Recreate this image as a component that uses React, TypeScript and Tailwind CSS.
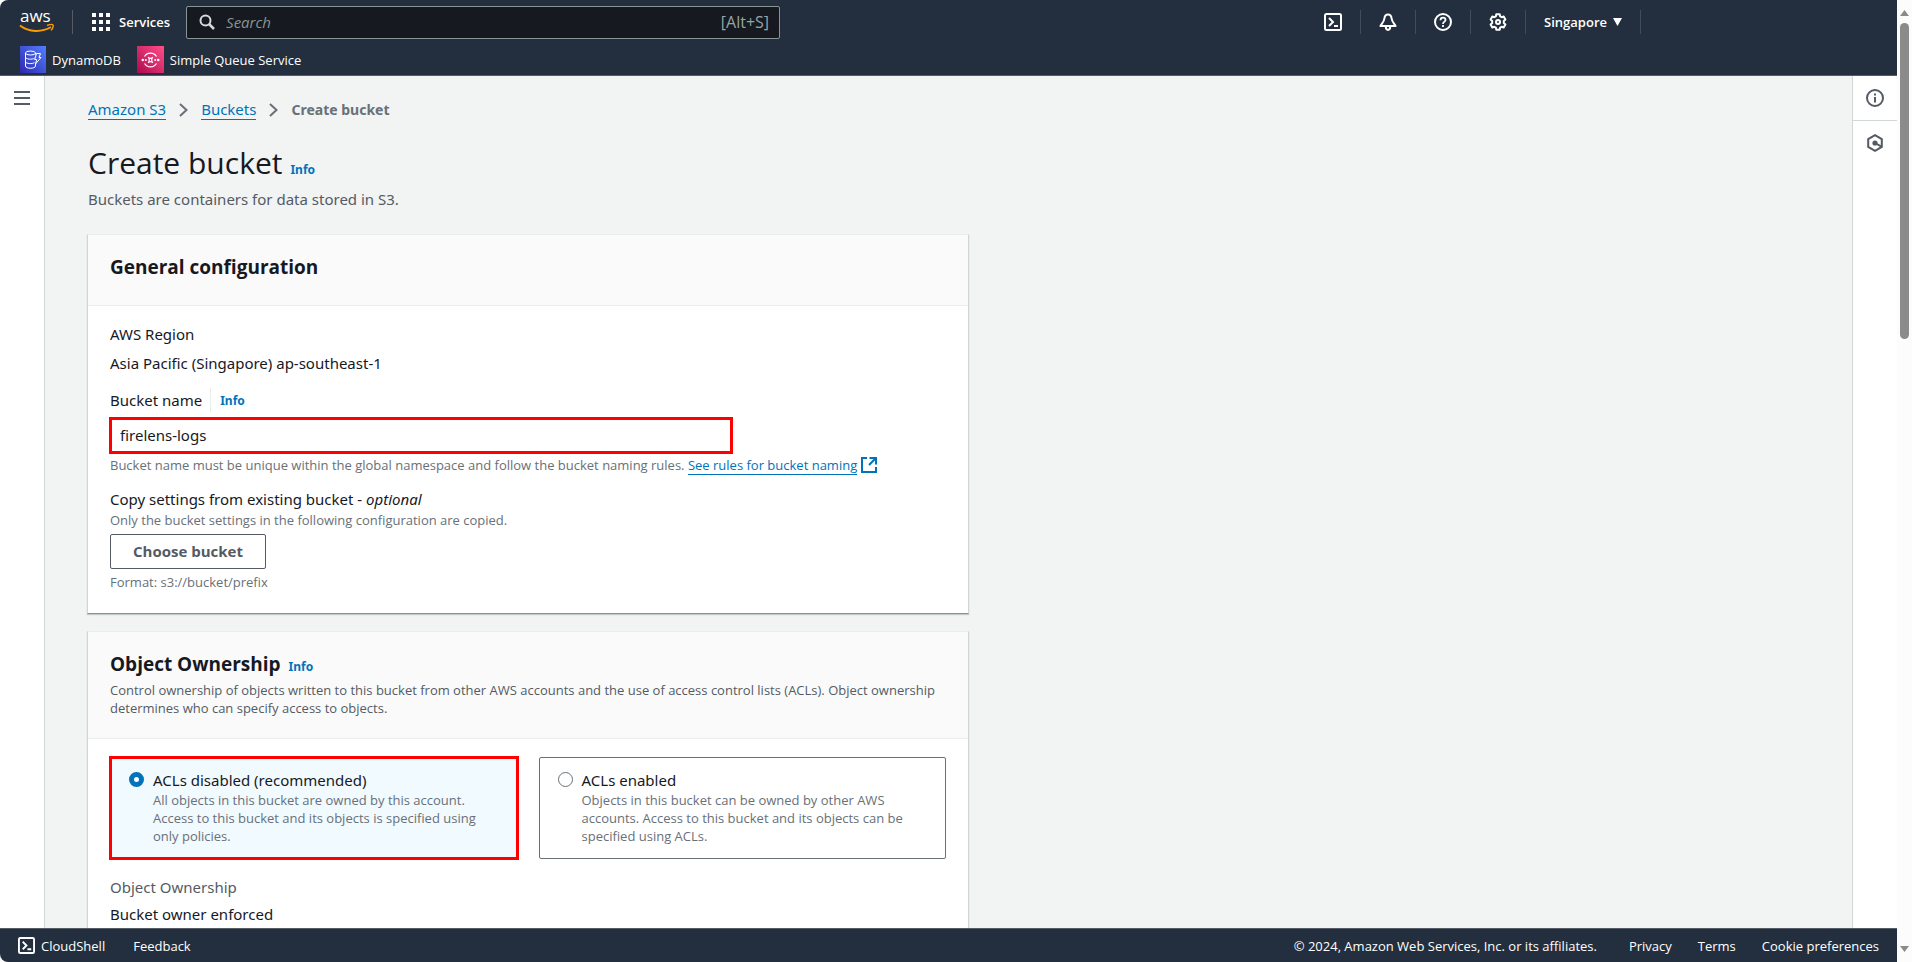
import { useState } from 'react'
import type { ReactNode } from 'react'

const aclOptions = [
    {
        id: 'disabled',
        label: 'ACLs disabled (recommended)',
        text: 'All objects in this bucket are owned by this account. Access to this bucket and its objects is specified using only policies.',
    },
    {
        id: 'enabled',
        label: 'ACLs enabled',
        text: 'Objects in this bucket can be owned by other AWS accounts. Access to this bucket and its objects can be specified using ACLs.',
    },
]

const AwsLogo = () => (
    <svg width="36" height="36" viewBox="0 -6 36 36" aria-label="AWS home">
        <text x="1" y="12" fill="#fff" fontSize="17" fontWeight="500" fontFamily="Open Sans, sans-serif">aws</text>
        <path d="M1 15.500 C10 22.500 23 22.500 32 17" fill="none" stroke="#f90" strokeWidth="2" />
        <path d="M28 15.500 C31 14.300 33.500 14.300 34 15 C34.400 16 33.600 18.600 32 20.400" fill="none" stroke="#f90" strokeWidth="1.400" />
    </svg>
)

const ShellIcon = ({ size = 18 }: { size?: number }) => (
    <svg width={size} height={size} viewBox="0 0 18 18" fill="none" stroke="currentColor" strokeWidth="2">
        <rect x="1" y="1" width="16" height="16" rx="1.5" />
        <path d="M5 5l4 4-4 4M10 13h4" />
    </svg>
)

const BellIcon = () => (
    <svg width="18" height="18" viewBox="0 0 18 18" fill="none" stroke="currentColor" strokeWidth="2" strokeLinejoin="round">
        <path d="M9 1.500c-2.600 0-3.400 2-3.600 4-.2 2.500-1.700 4-4 7.500h15.200c-2.300-3.500-3.800-5-4-7.500-.2-2-1-4-3.600-4z" />
        <path d="M6.800 13.500c0 4.500 4.400 4.500 4.400 0" />
    </svg>
)

const HelpIcon = () => (
    <svg width="18" height="18" viewBox="0 0 18 18" fill="none" stroke="currentColor" strokeWidth="2">
        <circle cx="9" cy="9" r="8" />
        <path d="M6.500 7.200c0-3.400 5-3.200 5-.2 0 1.700-2.500 1.700-2.500 4M9 12v2" strokeWidth="1.800" />
    </svg>
)

const GearIcon = () => (
    <svg width="18" height="18" viewBox="0 0 18 18" fill="none" stroke="currentColor" strokeWidth="2" strokeLinejoin="round">
        <path d="M7.300 1.200h3.400l.4 2.100 1.600.9 2-.7 1.700 2.900-1.600 1.500v2.200l1.600 1.500-1.700 2.900-2-.7-1.600.9-.4 2.100H7.300l-.4-2.100-1.600-.9-2 .7-1.700-2.900 1.600-1.500V7.900L1.600 6.400l1.700-2.900 2 .7 1.600-.9z" />
        <circle cx="9" cy="9" r="2" />
    </svg>
)

const InfoIcon = () => (
    <svg width="18" height="18" viewBox="0 0 18 18" fill="none" stroke="currentColor" strokeWidth="2">
        <circle cx="9" cy="9" r="8" />
        <path d="M9 8v5.500M9 4.500v2" />
    </svg>
)

const HexIcon = () => (
    <svg width="18" height="18" viewBox="0 0 18 18" fill="none" stroke="currentColor" strokeWidth="2">
        <path d="M9 1.200l6.800 3.900v7.800L9 16.800l-6.800-3.900V5.100z" />
        <circle cx="9" cy="9" r="2.600" fill="currentColor" stroke="none" />
        <path d="M9 9l6.500 3.600" />
    </svg>
)

const ExternalIcon = () => (
    <svg width="16" height="16" viewBox="0 0 16 16" fill="none" stroke="currentColor" strokeWidth="2" className="inline-block align-[-3px]">
        <path d="M6 1H1v14h14v-5M8.500 1H15v6.500M15 1L8 8" />
    </svg>
)

const DynamoIcon = () => (
    <svg width="26" height="27" viewBox="0 0 26 27">
        <defs>
            <linearGradient id="dynamo" x1="0" y1="1" x2="1" y2="0">
                <stop offset="0" stopColor="#2e27ad" />
                <stop offset="1" stopColor="#527fff" />
            </linearGradient>
        </defs>
        <rect width="26" height="27" fill="url(#dynamo)" />
        <g fill="none" stroke="#fff" strokeWidth="1">
            <ellipse cx="10.500" cy="7" rx="5" ry="2" />
            <path d="M5.500 7v13c0 3 10 3 10 0v-2M5.500 11.200c0 2.200 7 2.600 9 1M5.500 15.600c0 2.200 7 2.600 9 1M15.500 7v1.500" />
            <path d="M16.500 7.500h4l-1.500 4h2l-5.500 6.500 1.200-4.500h-2z" />
        </g>
    </svg>
)

const SqsIcon = () => (
    <svg width="27" height="27" viewBox="0 0 27 27">
        <defs>
            <linearGradient id="sqs" x1="0" y1="1" x2="1" y2="0">
                <stop offset="0" stopColor="#b0084d" />
                <stop offset="1" stopColor="#ff4f8b" />
            </linearGradient>
        </defs>
        <rect width="27" height="27" fill="url(#sqs)" />
        <g fill="none" stroke="#fff" strokeWidth="1.200">
            <path d="M7.500 10.500a7 7 0 0 1 12 0M7.500 17.500a7 7 0 0 0 12 0" />
            <path d="M11 11.500c1.500 1 3.500 1 5 0M11 16.500c1.500-1 3.500-1 5 0M11.500 11c1 1.800 1 4.200 0 6M15.500 11c-1 1.800-1 4.200 0 6" />
        </g>
        <g fill="#fff">
            <circle cx="5.800" cy="14" r="1.300" />
            <circle cx="21.200" cy="14" r="1.300" />
            <circle cx="8.800" cy="14" r="1" />
            <circle cx="18.200" cy="14" r="1" />
        </g>
    </svg>
)

const Chevron = () => (
    <svg width="9" height="14" viewBox="0 0 9 14" fill="none" stroke="#687078" strokeWidth="2">
        <path d="M1 1l6.500 6L1 13" />
    </svg>
)

const Divider = () => <span className="h-6 w-px bg-[#414d5c]" />

const InfoLink = () => (
    <a href="#info" className="font-['Noto_Sans',sans-serif] text-xs font-bold text-[#0073bb]">Info</a>
)

const Hint = ({ className, children }: { className?: string; children: ReactNode }) => (
    <p className={`font-['Open_Sans',sans-serif] text-[13px] leading-[18px] ${className ?? ''}`}>{children}</p>
)

const Card = ({ header, children }: { header: ReactNode; children: ReactNode }) => (
    <section className="border border-t-[#eaeded] border-x-[#d1d6d8] border-b-[#879596] bg-white shadow-[0_1px_1px_rgba(0,28,36,0.2)]">
        <div className="border-b border-[#eaeded] bg-[#fafafa] px-[22px]">{header}</div>
        <div className="px-[22px]">{children}</div>
    </section>
)

const TopBar = () => (
    <header className="h-19 shrink-0 rounded-tl-lg border-b border-[#545b64] bg-[#232f3e] font-['Open_Sans',sans-serif] text-white">
        <div className="flex h-11 items-center">
            <a href="#home" className="ml-[19px]"><AwsLogo /></a>
            <span className="ml-[17px] h-6 w-px bg-[#545b64]" />
            <button className="ml-[19px] flex items-center gap-[9px] text-[13px] font-semibold">
                <svg width="18" height="18" viewBox="0 0 18 18" fill="currentColor">
                    {[0, 7, 14].map(y => [0, 7, 14].map(x => (
                        <rect key={`${x}-${y}`} x={x} y={y} width="4" height="4" />
                    )))}
                </svg>
                Services
            </button>
            <label className="ml-4 flex h-[33px] w-[594px] items-center rounded-xs border border-[#879596] bg-[#16191f] pr-[10px] pl-3">
                <svg width="16" height="16" viewBox="0 0 16 16" fill="none" stroke="#d5dbdb" strokeWidth="2" aria-label="Search">
                    <circle cx="6.500" cy="6.500" r="5" />
                    <path d="M10 10l5 5" strokeWidth="2.500" />
                </svg>
                <input
                    type="search"
                    placeholder="Search"
                    className="ml-[11px] min-w-0 flex-1 text-[15px] outline-none placeholder:text-[#879596] placeholder:italic"
                />
                <span className="text-base text-[#95a5a6]">[Alt+S]</span>
            </label>
            <div className="mr-[256px] ml-auto flex items-center gap-[18px]">
                <button aria-label="CloudShell"><ShellIcon /></button>
                <Divider />
                <button aria-label="Notifications"><BellIcon /></button>
                <Divider />
                <button aria-label="Support"><HelpIcon /></button>
                <Divider />
                <button aria-label="Settings"><GearIcon /></button>
                <Divider />
                <button className="flex items-center gap-[6px] text-[13px] font-semibold">
                    Singapore
                    <svg width="9" height="8" viewBox="0 0 9 8" fill="currentColor"><path d="M0 0h9L4.500 8z" /></svg>
                </button>
                <Divider />
            </div>
        </div>
        <nav className="flex items-center gap-4 px-5 pt-[2px] text-[13px] font-medium">
            <a href="#dynamodb" className="flex items-center gap-[6px]"><DynamoIcon />DynamoDB</a>
            <a href="#sqs" className="flex items-center gap-[6px]"><SqsIcon />Simple Queue Service</a>
        </nav>
    </header>
)

const Footer = () => (
    <footer className="flex h-[34px] shrink-0 items-center rounded-bl-lg border-t border-[#545b64] bg-[#232f3e] px-[18px] font-['Open_Sans',sans-serif] text-[13px] font-medium text-white">
        <button className="flex items-center gap-[6px]"><ShellIcon size={17} />CloudShell</button>
        <a href="#feedback" className="ml-7">Feedback</a>
        <span className="ml-auto">© 2024, Amazon Web Services, Inc. or its affiliates.</span>
        <a href="#privacy" className="ml-8">Privacy</a>
        <a href="#terms" className="ml-[26px]">Terms</a>
        <a href="#cookies" className="ml-[26px]">Cookie preferences</a>
    </footer>
)

const ScrollTrack = () => (
    <div className="flex w-[15px] shrink-0 flex-col items-center bg-[#fcfcfc] py-[10px]">
        <svg width="9" height="6" viewBox="0 0 9 6" fill="#8b8b8b"><path d="M0 6h9L4.500 0z" /></svg>
        <span className="mt-[7px] h-[316px] w-[9px] rounded-full bg-[#8b8b8b]" />
        <svg width="9" height="6" viewBox="0 0 9 6" fill="#8b8b8b" className="mt-auto"><path d="M0 0h9L4.500 6z" /></svg>
    </div>
)

export default function App() {
    const [bucketName, setBucketName] = useState('firelens-logs')
    const [acl, setAcl] = useState('disabled')

    return (
        <div className="flex h-screen bg-[#fcfcfc] font-['Noto_Sans',sans-serif] text-[15px] leading-5 text-[#16191f]">
            <div className="flex min-w-0 flex-1 flex-col">
                <TopBar />
                <div className="flex min-h-0 flex-1 bg-[#f2f3f3]">
                    <aside className="w-[45px] shrink-0 border-r border-[#d1d6d8] bg-white">
                        <button aria-label="Open navigation" className="mt-[15px] ml-[14px] flex flex-col gap-1 text-[#545b64]">
                            <span className="h-[2px] w-4 bg-current" />
                            <span className="h-[2px] w-4 bg-current" />
                            <span className="h-[2px] w-4 bg-current" />
                        </button>
                    </aside>

                    <main className="min-w-0 flex-1 overflow-hidden px-[42px]">
                        <nav className="flex items-center gap-[13px] pt-[23px] pl-px">
                            <a href="#s3" className="border-b border-[#0073bb] leading-5 text-[#0073bb]">Amazon S3</a>
                            <Chevron />
                            <a href="#buckets" className="border-b border-[#0073bb] leading-5 text-[#0073bb]">Buckets</a>
                            <Chevron />
                            <span className="text-sm font-bold text-[#687078]">Create bucket</span>
                        </nav>

                        <div className="pl-px">
                            <h1 className="mt-[25px] flex items-baseline gap-2 font-['Open_Sans',sans-serif] text-[30px] leading-9">Create bucket <InfoLink /></h1>
                            <p className="mt-2 text-[#545b64]">Buckets are containers for data stored in S3.</p>
                        </div>

                        <div className="mt-[25px] flex max-w-[882px] flex-col gap-[17px]">
                            <Card header={<h2 className="pt-[19px] pb-[25px] font-['Open_Sans',sans-serif] text-[19px] leading-[26px] font-bold">General configuration</h2>}>
                                <div className="pt-[18px] pb-[22px]">
                                    <p>AWS Region</p>
                                    <p className="mt-[9px]">Asia Pacific (Singapore) ap-southeast-1</p>
                                    <div className="mt-[15px] flex h-6 items-center">
                                        <label htmlFor="bucket-name">Bucket name</label>
                                        <span className="ml-2 flex h-6 items-center border-l border-[#eaeded] pt-px pl-[9px]"><InfoLink /></span>
                                    </div>
                                    <input
                                        id="bucket-name"
                                        type="text"
                                        value={bucketName}
                                        onChange={e => setBucketName(e.target.value)}
                                        className="mt-[5px] -ml-px block h-[37px] w-[624px] border-3 border-[#ff0000] px-2 pb-px outline-none"
                                    />
                                    <Hint className="mt-[2px] text-[#687078]">
                                        Bucket name must be unique within the global namespace and follow the bucket naming rules.{' '}
                                        <a href="#rules" className="text-[#0073bb]">
                                            <span className="border-b border-[#0073bb]">See rules for bucket naming</span> <ExternalIcon />
                                        </a>
                                    </Hint>
                                    <h3 className="mt-[15px]">Copy settings from existing bucket - <i>optional</i></h3>
                                    <Hint className="mt-[2px] text-[#687078]">Only the bucket settings in the following configuration are copied.</Hint>
                                    <button className="mt-[5px] block h-[35px] rounded-xs border border-[#545b64] px-[22px] pb-px font-['Open_Sans',sans-serif] font-bold text-[#545b64]">
                                        Choose bucket
                                    </button>
                                    <Hint className="mt-1 text-[#687078]">Format: s3://bucket/prefix</Hint>
                                </div>
                            </Card>

                            <Card
                                header={
                                    <div className="pt-[19px] pb-[21px]">
                                        <h2 className="flex items-baseline gap-2 font-['Open_Sans',sans-serif] text-[19px] leading-[26px] font-bold">Object Ownership <InfoLink /></h2>
                                        <Hint className="mt-1 text-[#545b64]">
                                            Control ownership of objects written to this bucket from other AWS accounts and the use of access control lists (ACLs). Object ownership determines who can specify access to objects.
                                        </Hint>
                                    </div>
                                }
                            >
                                <div className="grid grid-cols-2 gap-[21px] pt-[17px]">
                                    {aclOptions.map(option => (
                                        <label
                                            key={option.id}
                                            className={acl === option.id
                                                ? '-mx-px flex gap-[9px] border-3 border-[#ff0000] bg-[#f1faff] pt-[11px] pr-6 pb-3 pl-[17px]'
                                                : 'my-px flex gap-[9px] rounded-xs border border-[#687078] pt-3 pr-6 pb-3 pl-[18px]'}
                                        >
                                            <input
                                                type="radio"
                                                name="acl"
                                                checked={acl === option.id}
                                                onChange={() => setAcl(option.id)}
                                                className="mt-[2px] size-[15px] shrink-0 appearance-none rounded-full border border-[#687078] bg-white checked:border-[5px] checked:border-[#0073bb]"
                                            />
                                            <span>
                                                <span className="block">{option.label}</span>
                                                <span className="mt-px block font-['Open_Sans',sans-serif] text-[13px] leading-[18px] text-[#687078]">{option.text}</span>
                                            </span>
                                        </label>
                                    ))}
                                </div>
                                <dl className="pt-[17px] pb-6">
                                    <dt className="text-[#545b64]">Object Ownership</dt>
                                    <dd className="mt-[7px]">Bucket owner enforced</dd>
                                </dl>
                            </Card>
                        </div>
                    </main>

                    <aside className="flex w-[45px] shrink-0 flex-col border-l border-[#d1d6d8] bg-white text-[#545b64]">
                        <button aria-label="Info panel" className="flex h-[45px] items-center justify-center border-b border-[#d1d6d8]"><InfoIcon /></button>
                        <button aria-label="Tutorials" className="flex h-[43px] items-center justify-center"><HexIcon /></button>
                    </aside>
                </div>
                <Footer />
            </div>
            <ScrollTrack />
        </div>
    )
}
